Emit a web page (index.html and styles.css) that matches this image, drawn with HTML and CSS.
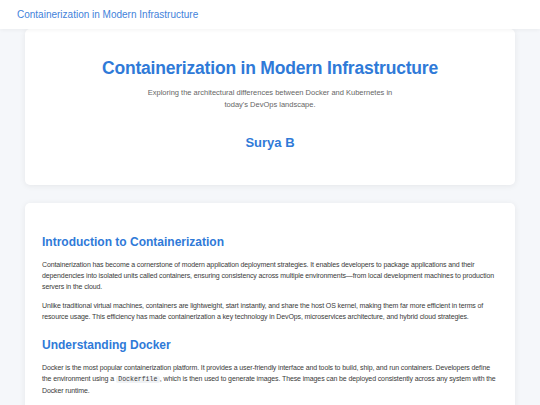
FILE: index.html
```html
<!DOCTYPE html>
<html lang="en">
<head>
<meta charset="utf-8">
<title>Containerization in Modern Infrastructure</title>
<link rel="stylesheet" href="styles.css">
</head>
<body>
<header class="topbar">
  <span class="brand">Containerization in Modern Infrastructure</span>
</header>
<main class="page">
  <section class="card hero">
    <h1 class="hero-title">Containerization in Modern Infrastructure</h1>
    <p class="hero-sub">Exploring the architectural differences between Docker and Kubernetes in today's DevOps landscape.</p>
    <p class="author">Surya B</p>
  </section>
  <article class="card content">
    <h2 class="section-title">Introduction to Containerization</h2>
    <p class="para">Containerization has become a cornerstone of modern application deployment strategies. It enables developers to package applications and their dependencies into isolated units called containers, ensuring consistency across multiple environments—from local development machines to production servers in the cloud.</p>
    <p class="para">Unlike traditional virtual machines, containers are lightweight, start instantly, and share the host OS kernel, making them far more efficient in terms of resource usage. This efficiency has made containerization a key technology in DevOps, microservices architecture, and hybrid cloud strategies.</p>
    <h2 class="section-title">Understanding Docker</h2>
    <p class="para">Docker is the most popular containerization platform. It provides a user-friendly interface and tools to build, ship, and run containers. Developers define the environment using a <code class="code">Dockerfile</code>, which is then used to generate images. These images can be deployed consistently across any system with the Docker runtime.</p>
  </article>
</main>
</body>
</html>
```
FILE: styles.css
```css
* { box-sizing: border-box; }
html, body { margin: 0; padding: 0; }
body {
  background: #f5f7fa;
  font-family: "Liberation Sans", Arial, sans-serif;
  color: #333;
}
.topbar {
  position: sticky;
  top: 0;
  z-index: 2;
  height: 29px;
  background: #fff;
  display: flex;
  align-items: center;
  padding-left: 17px;
  box-shadow: 0 1px 4px rgba(0,0,0,0.05);
}
.brand {
  color: #3f82da;
  font-size: 10px;
}
.page {
  display: flex;
  flex-direction: column;
  gap: 18px;
  padding: 0 25px;
}
.card {
  background: #fff;
  border-radius: 5px;
  box-shadow: 0 1px 6px rgba(0,0,0,0.07);
}
.hero {
  height: 156px;
  display: flex;
  flex-direction: column;
  align-items: center;
  text-align: center;
  padding-top: 29px;
}
.hero-title {
  margin: 0;
  color: #2f7ad8;
  font-size: 17.5px;
  line-height: 20px;
  letter-spacing: -0.2px;
  font-weight: bold;
}
.hero-sub {
  margin: 9px 0 0;
  max-width: 255px;
  font-size: 7.5px;
  line-height: 12px;
  color: #666;
}
.author {
  margin: 23.5px 0 0;
  color: #2f7ad8;
  font-size: 13px;
  line-height: 15px;
  font-weight: bold;
}
.content {
  padding: 32px 17px 10px;
}
.section-title {
  margin: 0 0 9.5px;
  color: #2f7ad8;
  font-size: 12px;
  line-height: 14px;
  font-weight: bold;
}
.para {
  margin: 0 0 8px;
  font-size: 7px;
  line-height: 11px;
  letter-spacing: -0.12px;
  color: #3a3a3a;
}
.para + .section-title { margin-top: 16.5px; }
.code {
  font-family: "Liberation Mono", monospace;
  font-size: 6.5px;
  letter-spacing: 0;
  background: #f0f2f5;
  padding: 0 2.5px;
  border-radius: 2px;
}
```
